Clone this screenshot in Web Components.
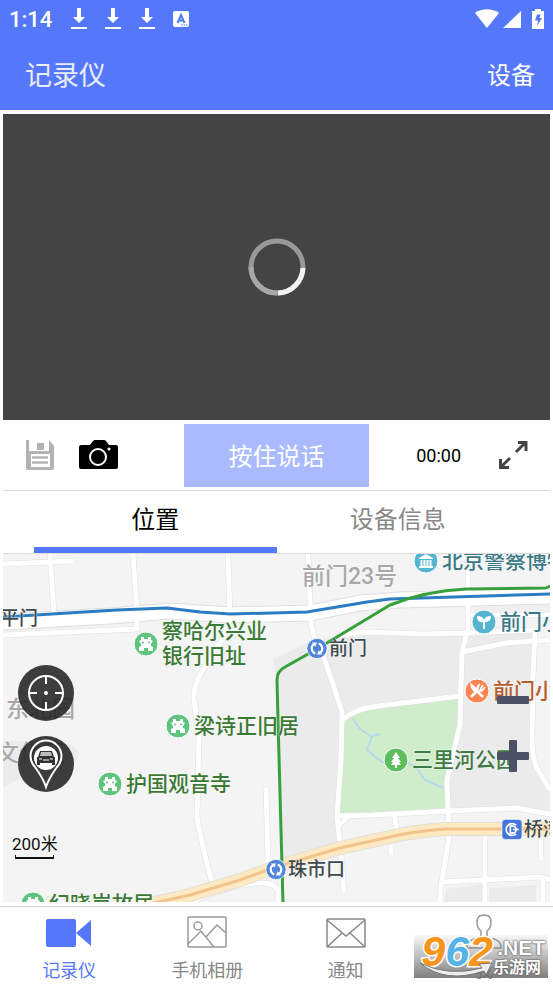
<!DOCTYPE html>
<html lang="zh-CN">
<head>
<meta charset="utf-8">
<meta name="viewport" content="width=device-width, initial-scale=1">
<title>记录仪</title>
<style>
  body {
    margin: 0;
    background: #fff;
    font-family: Roboto, "Noto Sans CJK SC", sans-serif;
  }
</style>
</head>
<body>
<recorder-app></recorder-app>

<script>
function define(name, html, setup) {
  const template = document.createElement('template')
  template.innerHTML = html
  customElements.define(name, class extends HTMLElement {
    constructor() {
      super()
      this.attachShadow({mode: 'open'}).appendChild(template.content.cloneNode(true))
    }

    connectedCallback() {
      if (setup) setup(this, this.shadowRoot)
    }
  })
}

define('status-bar', `
<style>
  :host { display: flex; align-items: center; height: 38px; padding: 0 9px; color: #fff; }
  .time { font-size: 22px; font-weight: 500; margin-right: 19px; }
  .left { display: flex; align-items: center; gap: 18px; flex: 1; }
  .right { display: flex; align-items: center; }
  svg { display: block; fill: currentColor; }
</style>
<span class="time">1:14</span>
<div class="left">
  <svg width="16" height="22" viewBox="0 0 16 22"><path d="M6 0h4v9h4l-6 6-6-6h4zM0 19h16v2H0z"/></svg>
  <svg width="16" height="22" viewBox="0 0 16 22"><path d="M6 0h4v9h4l-6 6-6-6h4zM0 19h16v2H0z"/></svg>
  <svg width="16" height="22" viewBox="0 0 16 22"><path d="M6 0h4v9h4l-6 6-6-6h4zM0 19h16v2H0z"/></svg>
  <svg width="16" height="16" viewBox="0 0 16 16"><rect width="16" height="16" rx="2"/><path d="M4.500 12 8 4l3.500 8M6 9.500h4" fill="none" stroke="#5578fb" stroke-width="2"/><path d="M8 14h1.500M10.500 14H12M13 14h1.500" stroke="#5578fb"/></svg>
</div>
<div class="right">
  <svg width="24" height="20" viewBox="0 0 24 20"><path d="M0 4C7-1 17-1 24 4L12 19z"/></svg>
  <svg width="18" height="18" viewBox="0 0 18 18" style="margin:0 11px 0 4px"><path d="M0 18 18 1v17z"/></svg>
  <svg width="12" height="20" viewBox="0 0 12 20"><path d="M3 0h6v2h3v18H0V2h3z"/><path d="M5 5.500h3.500L7.500 9H10l-5 8 1-5.500H3z" fill="#5578fb"/></svg>
</div>
`)

define('title-bar', `
<style>
  :host { display: flex; align-items: center; justify-content: space-between; height: 70px; padding: 0 18px 2px 25px; color: #fff; }
  h1 { margin: 0; font-size: 27px; font-weight: 400; color: #e9edff; }
  button { border: 0; padding: 0; background: none; color: inherit; font: inherit; font-size: 24px; }
</style>
<h1><slot></slot></h1>
<button type="button">设备</button>
`)

define('video-view', `
<style>
  :host { display: flex; align-items: center; justify-content: center; aspect-ratio: 547 / 306; background: #444; }
</style>
<svg width="60" height="60" viewBox="0 0 60 60" fill="none" stroke-width="5" role="img" aria-label="加载中">
  <circle cx="30" cy="30" r="26" stroke="#999"/>
  <path d="M30 56A26 26 0 0 1 4 30" stroke="#a8a8a8"/>
  <path d="M56 31A26 26 0 0 1 31 56" stroke="#f2f2f2"/>
</svg>
`)

define('video-tools', `
<style>
  :host { display: flex; align-items: center; height: 71px; border-bottom: 1px solid #ddd; box-sizing: border-box; }
  .side { display: flex; align-items: center; flex: 1; gap: 24px; padding: 0 22px; }
  .end { justify-content: flex-end; gap: 37px; }
  button { border: 0; padding: 0; background: none; }
  svg { display: block; }
  .talk { height: 63px; width: 34%; padding-bottom: 2px; background: #aabafe; color: #fff; font: inherit; font-size: 24px; }
  time { font-size: 18px; }
</style>
<div class="side">
  <button type="button" aria-label="保存"><svg width="30" height="30" viewBox="0 0 30 30" fill="#b3b3b3"><path d="M1 1q0-1 1-1h2v11h20V0l5 6v22q0 2-2 2H3q-2 0-2-2z"/><path d="M12 3h7v7h-7z"/><path d="M6 14h19v13H6z" fill="#fff"/><path d="M7 17.500h16M7 22.500h16" stroke="#b3b3b3" stroke-width="2.500"/></svg></button>
  <button type="button" aria-label="拍照"><svg width="39" height="30" viewBox="0 0 39 30"><path d="M2 5h9l3-4q1-1 2-1h9q1 0 2 1l3 4h7q2 0 2 2v20q0 2-2 2H2q-2 0-2-2V7q0-2 2-2z"/><circle cx="19" cy="17" r="8" fill="none" stroke="#fff" stroke-width="2"/><circle cx="30" cy="9" r="1.500" fill="#fff"/></svg></button>
</div>
<button type="button" class="talk">按住说话</button>
<div class="side end">
  <time>00:00</time>
  <button type="button" aria-label="全屏"><svg width="30" height="30" viewBox="0 0 30 30" fill="none" stroke="#444" stroke-width="3"><path d="M18 12 27 3M20 2.500h8V11M12 18 3 27M2.500 19v8.500H11"/></svg></button>
</div>
`)

define('info-tabs', `
<style>
  :host { display: flex; height: 63px; padding: 0 31px; border-bottom: 1px solid #ddd; box-sizing: border-box; }
  button { flex: 1; border: 0; border-bottom: 6px solid transparent; padding: 0 0 3px; background: none; color: #888; font: inherit; font-size: 24px; }
  button[aria-selected="true"] { color: #000; border-color: #5578fb; }
</style>
<button type="button" role="tab" aria-selected="true">位置</button>
<button type="button" role="tab" aria-selected="false">设备信息</button>
`, (host, root) => {
  host.setAttribute('role', 'tablist')
  const tabs = root.querySelectorAll('button')
  tabs.forEach(tab => tab.addEventListener('click', () => {
    tabs.forEach(t => t.setAttribute('aria-selected', t === tab))
  }))
})

// icon and colour of each kind of place
const gate = '<path d="M8 6h3v2h4V6h3v3l2 1-2 3v2l2 1v4h-5v-3h-4v3H6v-4l2-1v-2l-2-3 2-1z" fill="#fff"/><path d="M9 11.500h2M15 11.500h2" stroke="#5fc47d" stroke-width="1.500"/>'
const swirl = '<path d="M11 19A6.500 6.500 0 0 1 9 8M15 7a6.500 6.500 0 0 1 2 11" fill="none" stroke="#fff" stroke-width="2.500"/><path d="m7 6 6 0-2 5zM19 20l-6 0 2-5z" fill="#fff"/>'
const kinds = {
  sight: {fill: '#5fc47d', text: '#3a7a35', icon: gate},
  park: {fill: '#5fbe5b', text: '#3f7a45', icon: '<path d="m13 5 4 6h-2l3 4h-2l2 3h-4v3h-2v-3H8l2-3H8l3-4H9z" fill="#fff"/>'},
  museum: {fill: '#55b5d0', text: '#397987', icon: '<path d="m13 6 7 4v1H6v-1zM6 18h14v2H6z" fill="#fff"/><path d="M8.500 12v6M11.500 12v6M14.500 12v6M17.500 12v6" stroke="#fff" stroke-width="2"/>'},
  sprout: {fill: '#55b5d0', text: '#397987', icon: '<path d="M12 13q-6 1-6-6 6 0 7 4 1-4 7-4 0 6-6 6v7h-2z" fill="#fff"/>'},
  food: {fill: '#fb8453', text: '#b55b2b', icon: '<path d="m7 19 7-7M8 8l11 11" stroke="#fff" stroke-width="2.500"/><path d="m7 6 7 7-3 1q-4-4-4-8zM14 12l-1-3 3-3M16 12l3-5M15 13l3 0 3-4" fill="#fff" stroke="#fff" stroke-width="1.500"/>'},
  metro: {fill: '#4f86d9', text: '#3d4a50', icon: swirl},
  subway: {fill: '#4277dc', text: '#3d4a50', icon: '<path d="M18 8a7 7 0 1 0 0 10M11 9v8h3a4 4 0 0 0 0-8zM14 13h7" fill="none" stroke="#fff" stroke-width="2"/>'},
  area: {text: '#a8a8a8'},
  street: {text: '#3d4a50'}
}

define('map-place', `
<style>
  :host { position: absolute; display: flex; align-items: center; gap: 3px; transform: translateY(-50%); white-space: nowrap; font-size: 21px; line-height: 25px; font-weight: 500; text-shadow: 0 0 2px #fff; }
  :host([kind="metro"]), :host([kind="subway"]), :host([kind="street"]) { font-size: 19px; gap: 1px; }
  :host([kind="area"]) { font-size: 23px; }
  svg { width: 26px; height: 26px; flex: none; }
  :host([kind="metro"]) svg, :host([kind="subway"]) svg { width: 22px; height: 22px; }
</style>
<slot></slot>
`, (host, root) => {
  const kind = kinds[host.getAttribute('kind')]
  host.style.left = host.getAttribute('x') + 'px'
  host.style.top = host.getAttribute('y') + 'px'
  host.style.color = kind.text
  if (kind.icon) {
    const shape = kind === kinds.subway
      ? '<rect x="1" y="1" width="24" height="24" rx="4"'
      : '<circle cx="13" cy="13" r="12"'
    root.querySelector('slot').insertAdjacentHTML('beforebegin',
      `<svg viewBox="0 0 26 26">${shape} fill="${kind.fill}" stroke="#fff"/>${kind.icon}</svg>`)
  }
})

define('map-view', `
<style>
  :host { display: block; position: relative; overflow: hidden; background: #f4f4f4; }
  .ground { position: absolute; left: 0; top: 0; width: 100%; height: 100%; }
  button { display: block; border: 0; padding: 0; background: none; }
  button svg { display: block; }
  .locate { position: absolute; left: 15px; top: 111px; display: grid; gap: 15px; }
  .locate button { width: 56px; height: 56px; border-radius: 50%; background: rgba(35, 35, 35, .88); }
  .zoom { position: absolute; right: 21px; top: 130px; display: grid; gap: 24px; }
  .scale { position: absolute; left: 9px; top: 280px; font-size: 17px; line-height: 20px; color: #111; }
  .scale::after { content: ""; display: block; height: 2px; margin: 1px 4px 0 3px; border: 1px solid #111; border-width: 0 1px 2px; }
</style>
<svg class="ground" viewBox="3 554 547 348" preserveAspectRatio="xMinYMin slice" fill="none" stroke-linejoin="round" aria-hidden="true">
  <g fill="#ebebeb">
    <path d="M273 659 310 642 350 633H535L533 760 550 792V812L448 811 338 816 338 843 283 858 277 690z"/>
    <path d="M3 740 70 745q14 6 6 16L35 772 3 787zM447 889 482 884V902H444zM489 888 536 885V902H489z"/>
    <path d="M473 600H550V612H473z" fill="#efefef"/>
  </g>
  <path d="M343 718 378 706 458 696 460 722 447 780 446 811 340 815z" fill="#d0edcb"/>
  <path d="M353 719 360 729 372 737 367 750 382 762 400 760 416 767 425 780 443 788M372 736 380 734" stroke="#b4d8ec" stroke-width="2"/>
  <defs>
    <g id="lanes">
      <path d="M3 564 73 561M50 554 54 614M133 554 137 612V629L3 635"/>
      <path d="M228 554 230 618 223 638 200 675Q193 688 194 700L199 737 197 817Q199 832 212 883"/>
      <path d="M308 554 311 622Q312 636 323 655L335 690 342 712 341 760 337 817 340 843 344 893"/>
      <path d="M343 719Q355 709 378 706L460 696M338 816 373 815 448 811 516 808 550 814M338 826 348 817"/>
      <path d="M340 636Q355 632 373 632L423 634 470 633 533 630M468 615H550M462 652 506 643 550 640"/>
      <path d="M468 554V628L462 652 460 725 447 780 449 837 441 887 440 902"/>
      <path d="M535 632 533 678 532 740Q532 758 538 770L550 790M266 788 268 862"/>
      <path d="M485 837V902M443 882 541 877 550 880M543 878V902M541 837V860M394 813 397 830M391 845V855"/>
      <path d="M190 902Q240 882 262 883T277 902M281 858V902"/>
    </g>
    <path id="avenue" d="M3 622 110 616 170 611 230 615 310 613 360 603 400 600 550 596"/>
    <path id="highway" d="M145 905 190 895 240 880 273 868 340 848 390 837Q415 831 446 829H550"/>
  </defs>
  <use href="#lanes" stroke="#dedede" stroke-width="6"/>
  <use href="#avenue" stroke="#dedede" stroke-width="17"/>
  <use href="#avenue" stroke="#fff" stroke-width="15"/>
  <use href="#lanes" stroke="#fff" stroke-width="5"/>
  <use href="#highway" stroke="#e3dfd5" stroke-width="14"/>
  <use href="#highway" stroke="#fdeac2" stroke-width="12"/>
  <use href="#highway" stroke="#f2c48b" stroke-width="3"/>
  <path d="M3 617 117 610 167 608 200 612 230 614 307 612 367 602 390 599 550 594" stroke="#2b7cc0" stroke-width="3"/>
  <path d="M283 903 278 720 277 680Q277 671 285 667L317 649 390 605Q425 591 466 589L546 588 550 586" stroke="#36a13a" stroke-width="3"/>
</svg>
<map-place kind="area" x="299" y="22">前门23号</map-place>
<map-place kind="area" x="3" y="155">东北园</map-place>
<map-place kind="area" x="-7" y="199">文化区</map-place>
<map-place kind="street" x="-3" y="64">平门</map-place>
<map-place kind="sight" x="130" y="90">察哈尔兴业<br>银行旧址</map-place>
<map-place kind="sight" x="162" y="172">梁诗正旧居</map-place>
<map-place kind="sight" x="94" y="230">护国观音寺</map-place>
<map-place kind="sight" x="17" y="350">纪晓岚故居</map-place>
<map-place kind="park" x="380" y="206">三里河公园</map-place>
<map-place kind="museum" x="410" y="7">北京警察博物馆</map-place>
<map-place kind="sprout" x="468" y="68">前门小学</map-place>
<map-place kind="food" x="461" y="137">前门小吃</map-place>
<map-place kind="metro" x="303" y="94">前门</map-place>
<map-place kind="metro" x="262" y="315">珠市口</map-place>
<map-place kind="subway" x="498" y="275">桥湾</map-place>
<div class="locate">
  <button type="button" aria-label="定位"><svg width="56" height="56" viewBox="0 0 56 56" fill="none" stroke="#fff" stroke-width="2"><circle cx="28" cy="28" r="17"/><path d="M28 11v8M28 37v8M11 28h8M37 28h8"/><circle cx="28" cy="28" r="2" fill="#fff" stroke="none"/></svg></button>
  <button type="button" aria-label="车辆位置"><svg width="56" height="56" viewBox="0 0 56 56"><path d="M28 51Q25 42 17 31A15.500 15.500 0 1 1 39 31Q31 42 28 51z" fill="none" stroke="#fff" stroke-width="2"/><circle cx="28" cy="22" r="12" fill="#fff"/><path d="m22 15h12l2 6h1v8h-3v-2H22v2h-3v-8h1z" fill="#333"/><path d="m23 16-1 4h12l-1-4z" fill="#bbb"/><path d="M21 23h3M32 23h3M25 24h6" stroke="#fff"/></svg></button>
</div>
<div class="zoom">
  <button type="button" aria-label="缩小"><svg width="32" height="32" viewBox="0 0 32 32"><rect y="12" width="32" height="8" rx="1" fill="#4b5264"/></svg></button>
  <button type="button" aria-label="放大"><svg width="32" height="32" viewBox="0 0 32 32" fill="#4b5264"><rect y="12" width="32" height="8" rx="1"/><rect x="12" width="8" height="32" rx="1"/></svg></button>
</div>
<div class="scale">200米</div>
`)

define('nav-item', `
<style>
  :host { flex: 1; }
  a { display: flex; flex-direction: column; align-items: center; padding-top: 7px; color: #888; text-decoration: none; font-size: 18px; line-height: 26px; }
  :host([current]) a { color: #5578fb; }
  ::slotted(svg) { display: block; margin-bottom: 8px; }
</style>
<a href="#"><slot name="icon"></slot><slot></slot></a>
`)

define('site-badge', `
<style>
  :host { position: absolute; right: 5px; bottom: 6px; width: 134px; height: 43px; overflow: hidden; background: linear-gradient(rgba(190, 190, 190, .1), rgba(105, 105, 105, .85)); font-family: "Liberation Sans", "Noto Sans CJK SC", sans-serif; font-weight: 700; color: #fff; }
  .row { display: flex; justify-content: flex-end; padding-right: 3px; }
  .num { font-size: 43px; line-height: 32px; font-style: italic; -webkit-text-stroke: 3px #fff; paint-order: stroke; color: #f8951d; }
  .num i { color: #55b3e8; }
  .names { display: flex; flex-direction: column; align-items: flex-end; text-shadow: 0 0 2px #555, 0 0 2px #555; }
  .net { font-size: 21px; line-height: 25px; }
  .cn { font-size: 16px; line-height: 16px; padding-right: 4px; }
  svg { position: absolute; left: 6px; bottom: 0; }
</style>
<svg width="72" height="16" viewBox="0 0 72 16"><path d="M0 1Q28 15 62 6L59 2 72 1 66 13 64 9Q25 22 0 1z" fill="#eee" stroke="#777"/></svg>
<div class="row">
  <span class="num">9<i>6</i>2</span>
  <div class="names"><span class="net">.NET</span><span class="cn">乐游网</span></div>
</div>
`)

define('bottom-nav', `
<style>
  :host { display: block; position: relative; height: 78px; border-top: 1px solid #d5d5d5; box-sizing: border-box; }
  nav { display: flex; }
</style>
<nav>
  <nav-item current>
    <svg slot="icon" width="46" height="36" viewBox="0 0 46 36" fill="#5578fb"><path d="M2 5h26q2 0 2 2v24q0 2-2 2H2q-2 0-2-2V7q0-2 2-2zM30 19 45 6v26z"/></svg>记录仪
  </nav-item>
  <nav-item>
    <svg slot="icon" width="42" height="36" viewBox="0 0 42 36" fill="none" stroke="#999" stroke-width="1.500"><rect x="2" y="3" width="38" height="30" rx="1"/><circle cx="12" cy="12" r="4"/><path d="m2 30 13-13 13 16M20 23 31 11l9 8"/></svg>手机相册
  </nav-item>
  <nav-item>
    <svg slot="icon" width="42" height="36" viewBox="0 0 42 36" fill="none" stroke="#888" stroke-width="1.500"><rect x="2" y="5" width="38" height="28" rx="1"/><path d="m2 6 19 16L40 6M2 33l15-14M40 33 25 19"/></svg>通知
  </nav-item>
  <nav-item>
    <svg slot="icon" width="42" height="36" viewBox="0 0 42 36" fill="none" stroke="#999" stroke-width="1.500"><path d="M18 21V17q-4-3-4-9 0-7 7-7t7 7q0 6-4 9v4q0 3 7 4 7 2 7 9H4q0-7 7-9 7-1 7-4z"/></svg>我
  </nav-item>
</nav>
<site-badge></site-badge>
`)

define('recorder-app', `
<style>
  :host { display: flex; flex-direction: column; min-height: 100vh; }
  header { background: #5578fb; }
  main { display: flex; flex-direction: column; flex: 1; padding: 4px 3px; }
  map-view { flex: 1; min-height: 240px; }
</style>
<header>
  <status-bar></status-bar>
  <title-bar>记录仪</title-bar>
</header>
<main>
  <video-view></video-view>
  <video-tools></video-tools>
  <info-tabs></info-tabs>
  <map-view></map-view>
</main>
<bottom-nav></bottom-nav>
`)
</script>
</body>
</html>
